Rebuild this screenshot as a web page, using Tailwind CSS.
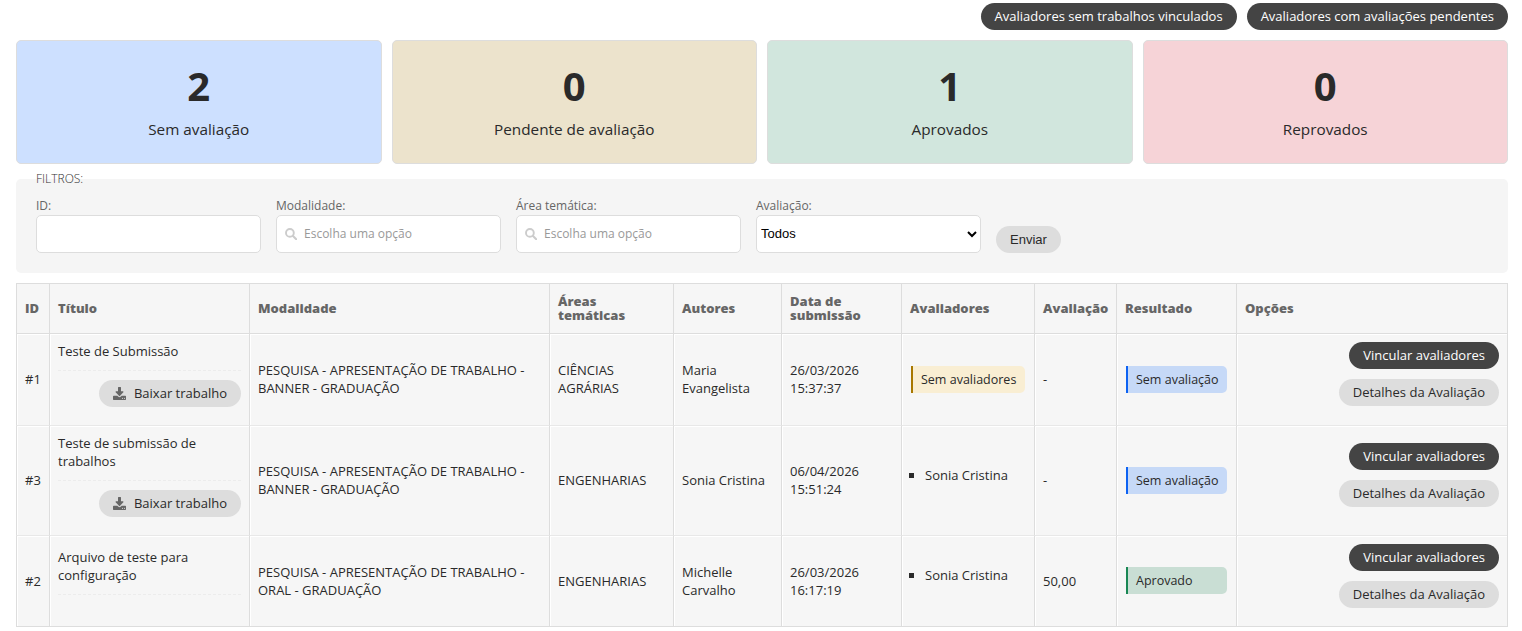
<!DOCTYPE html>
<html lang="pt-BR">
<head>
    <meta charset="UTF-8">
    <meta name="viewport" content="width=device-width, initial-scale=1.0">
    <title>Avaliação de trabalhos</title>
    <script src="https://cdn.jsdelivr.net/npm/@tailwindcss/browser@4"></script>
</head>
<body class="bg-white font-['Open_Sans',sans-serif] text-[13px] leading-[18px] text-[#2a2a2a]">
    <svg class="hidden">
        <symbol id="icon-download" viewBox="0 0 1664 1536" preserveAspectRatio="none">
            <path d="M1280 1344q0-26-19-45t-45-19-45 19-19 45 19 45 45 19 45-19 19-45zm256 0q0-26-19-45t-45-19-45 19-19 45 19 45 45 19 45-19 19-45zm128-224v320q0 40-28 68t-68 28H96q-40 0-68-28t-28-68v-320q0-40 28-68t68-28h465l135 136q58 56 136 56t136-56l136-136h464q40 0 68 28t28 68zm-325-569q17 41-14 70l-448 448q-18 19-45 19t-45-19L339 621q-31-29-14-70 17-39 59-39h256V64q0-26 19-45T704 0h256q26 0 45 19t19 45v448h256q42 0 59 39z" fill-rule="evenodd" />
        </symbol>
        <symbol id="icon-search" viewBox="0 0 12 12">
            <circle cx="4.900" cy="4.900" r="3.900" fill="none" stroke="currentColor" stroke-width="1.900" />
            <path d="M7.800 7.800L11.200 11.200" stroke="currentColor" stroke-width="2.100" stroke-linecap="round" />
        </symbol>
    </svg>

    <div class="px-4 pr-[14px] pt-[3px]">
        <!-- Actions -->
        <div class="flex justify-end gap-2.5">
            <a class="h-[27px] px-3.5 rounded-full bg-[#444] text-white leading-[27px]">Avaliadores sem trabalhos vinculados</a>
            <a class="h-[27px] px-3.5 rounded-full bg-[#444] text-white leading-[27px]">Avaliadores com avaliações pendentes</a>
        </div>

        <!-- Totals -->
        <div class="mt-2.5 grid grid-cols-4 gap-2.5 text-center">
            <div class="h-[124px] pt-[25px] rounded-[5px] border border-[#ddd] bg-[#cde0ff]">
                <p class="text-[40px] leading-10 font-bold">2</p>
                <p class="mt-[13px] text-[15.3px] leading-5 font-medium">Sem avaliação</p>
            </div>
            <div class="h-[124px] pt-[25px] rounded-[5px] border border-[#ddd] bg-[#ece3cc]">
                <p class="text-[40px] leading-10 font-bold">0</p>
                <p class="mt-[13px] text-[15.3px] leading-5 font-medium">Pendente de avaliação</p>
            </div>
            <div class="h-[124px] pt-[25px] rounded-[5px] border border-[#ddd] bg-[#d1e6dd]">
                <p class="text-[40px] leading-10 font-bold">1</p>
                <p class="mt-[13px] text-[15.3px] leading-5 font-medium">Aprovados</p>
            </div>
            <div class="h-[124px] pt-[25px] rounded-[5px] border border-[#ddd] bg-[#f6d3d7]">
                <p class="text-[40px] leading-10 font-bold">0</p>
                <p class="mt-[13px] text-[15.3px] leading-5 font-medium">Reprovados</p>
            </div>
        </div>

        <!-- Filters -->
        <form class="flow-root mt-[15px] h-[94px] px-5 rounded-[5px] bg-[#f5f5f5] text-xs text-[#666]">
            <div class="h-[18px] -mt-[9px] mb-[9px] leading-[18px] font-light text-[#333]">FILTROS:</div>
            <div class="flex items-end gap-[15px]">
                <div class="w-[225px]">
                    <label class="block leading-[18px]">ID:</label>
                    <input type="text" class="block w-full h-[38px] rounded-[5px] border border-[#ddd] bg-white">
                </div>
                <div class="w-[225px]">
                    <label class="block leading-[18px]">Modalidade:</label>
                    <div class="flex items-center h-[38px] pl-2 rounded-[5px] border border-[#ddd] bg-white text-[#999]">
                        <svg class="size-3 mr-[7px] text-[#ccc]"><use href="#icon-search" /></svg>Escolha uma opção
                    </div>
                </div>
                <div class="w-[225px]">
                    <label class="block leading-[18px]">Área temática:</label>
                    <div class="flex items-center h-[38px] pl-2 rounded-[5px] border border-[#ddd] bg-white text-[#999]">
                        <svg class="size-3 mr-[7px] text-[#ccc]"><use href="#icon-search" /></svg>Escolha uma opção
                    </div>
                </div>
                <div class="w-[225px]">
                    <label class="block leading-[18px]">Avaliação:</label>
                    <select class="block w-full h-[38px] pb-0.5 rounded-[5px] border border-[#ddd] bg-white font-['Liberation_Sans',sans-serif] text-[13px] text-black">
                        <option>Todos</option>
                    </select>
                </div>
                <button type="button" class="w-[65px] h-[27px] rounded-full bg-[#ddd] font-['Liberation_Sans',sans-serif] text-[13px] text-[#2a2a2a]">Enviar</button>
            </div>
        </form>

        <!-- Submissions -->
        <table class="mt-2.5 w-full table-fixed border-separate border-spacing-0 border-r border-[#ddd] bg-[#f6f6f6]">
            <colgroup>
                <col class="w-[33px]"><col class="w-[200px]"><col class="w-[300px]"><col class="w-[124px]"><col class="w-[108px]"><col class="w-[120px]"><col class="w-[133px]"><col class="w-[82px]"><col class="w-[120px]"><col>
            </colgroup>
            <thead class="text-left text-[13px] leading-[14px] text-[#666] [&_th]:border-y [&_th]:border-l [&_th]:border-[#ddd] [&_th]:px-2 [&_th]:pb-px [&_th]:font-extrabold">
                <tr class="h-[51px]">
                    <th>ID</th>
                    <th>Título</th>
                    <th>Modalidade</th>
                    <th>Áreas temáticas</th>
                    <th>Autores</th>
                    <th>Data de submissão</th>
                    <th>Avaliadores</th>
                    <th>Avaliação</th>
                    <th>Resultado</th>
                    <th>Opções</th>
                </tr>
            </thead>
            <tbody class="[&_td]:border-l [&_td]:border-b [&_td]:border-l-[#ddd] [&_td]:border-b-[#e8e8e8] [&_td]:px-2 [&_td]:pt-2 [&_td]:shadow-[inset_1px_1px_0_#fff] [&_tr:last-child_td]:border-b-[#ddd]">
                <tr class="h-[92px]">
                    <td class="pb-[9px]">#1</td>
                    <td class="pb-2">
                        <p>Teste de Submissão</p>
                        <div class="mt-2.5 pt-[9px] border-t border-dashed border-[#ececec] flex justify-end">
                            <a class="mb-2.5 h-[27px] px-3.5 rounded-full bg-[#ddd] leading-[27px] flex items-center"><svg class="size-[13px] mr-2 fill-[#666]"><use href="#icon-download" /></svg>Baixar trabalho</a>
                        </div>
                    </td>
                    <td class="pb-[9px]">PESQUISA - APRESENTAÇÃO DE TRABALHO - BANNER - GRADUAÇÃO</td>
                    <td class="pb-[9px]">CIÊNCIAS AGRÁRIAS</td>
                    <td class="pb-[9px]">Maria Evangelista</td>
                    <td class="pb-[9px]">26/03/2026 15:37:37</td>
                    <td class="pb-2"><div class="mx-px h-[27px] pl-2 rounded-r-[5px] border-l-2 border-[#a87800] bg-[#f9eed3] text-[12.5px] leading-[27px] whitespace-nowrap">Sem avaliadores</div></td>
                    <td class="pb-[9px]">-</td>
                    <td class="pb-2"><div class="mx-px h-[27px] pl-2 rounded-r-[5px] border-l-2 border-[#0d62f2] bg-[#c6d9f7] text-[12.5px] leading-[27px] whitespace-nowrap">Sem avaliação</div></td>
                    <td class="pb-[9px]">
                        <div class="flex flex-col items-end gap-2.5 pb-2.5 leading-[27px]">
                            <a class="h-[27px] px-3.5 rounded-full bg-[#444] text-white">Vincular avaliadores</a>
                            <a class="h-[27px] px-3.5 rounded-full bg-[#ddd]">Detalhes da Avaliação</a>
                        </div>
                    </td>
                </tr>
                <tr class="h-[110px]">
                    <td class="pb-[9px]">#3</td>
                    <td class="pb-2">
                        <p>Teste de submissão de trabalhos</p>
                        <div class="mt-2.5 pt-[9px] border-t border-dashed border-[#ececec] flex justify-end">
                            <a class="mb-2.5 h-[27px] px-3.5 rounded-full bg-[#ddd] leading-[27px] flex items-center"><svg class="size-[13px] mr-2 fill-[#666]"><use href="#icon-download" /></svg>Baixar trabalho</a>
                        </div>
                    </td>
                    <td class="pb-[9px]">PESQUISA - APRESENTAÇÃO DE TRABALHO - BANNER - GRADUAÇÃO</td>
                    <td class="pb-[9px]">ENGENHARIAS</td>
                    <td class="pb-[9px]">Sonia Cristina</td>
                    <td class="pb-[9px]">06/04/2026 15:51:24</td>
                    <td class="pb-[9px]">
                        <ul class="mb-2.5">
                            <li class="-ml-px flex items-center gap-[11px]"><span class="size-[5px] bg-[#2a2a2a]"></span>Sonia Cristina</li>
                        </ul>
                    </td>
                    <td class="pb-[9px]">-</td>
                    <td class="pb-2"><div class="mx-px h-[27px] pl-2 rounded-r-[5px] border-l-2 border-[#0d62f2] bg-[#c6d9f7] text-[12.5px] leading-[27px] whitespace-nowrap">Sem avaliação</div></td>
                    <td class="pb-[9px]">
                        <div class="flex flex-col items-end gap-2.5 pb-2.5 leading-[27px]">
                            <a class="h-[27px] px-3.5 rounded-full bg-[#444] text-white">Vincular avaliadores</a>
                            <a class="h-[27px] px-3.5 rounded-full bg-[#ddd]">Detalhes da Avaliação</a>
                        </div>
                    </td>
                </tr>
                <tr class="h-[91px]">
                    <td class="pb-2">#2</td>
                    <td class="pb-2">
                        <p>Arquivo de teste para configuração</p>
                        <div class="mt-2.5 h-5 border-t border-dashed border-[#ececec]"></div>
                    </td>
                    <td class="pb-2">PESQUISA - APRESENTAÇÃO DE TRABALHO - ORAL - GRADUAÇÃO</td>
                    <td class="pb-2">ENGENHARIAS</td>
                    <td class="pb-2">Michelle Carvalho</td>
                    <td class="pb-2">26/03/2026 16:17:19</td>
                    <td class="pb-2.5">
                        <ul class="mb-2.5">
                            <li class="-ml-px flex items-center gap-[11px]"><span class="size-[5px] bg-[#2a2a2a]"></span>Sonia Cristina</li>
                        </ul>
                    </td>
                    <td class="pb-2">50,00</td>
                    <td class="pb-[9px]"><div class="mx-px h-[27px] pl-2 rounded-r-[5px] border-l-2 border-[#198754] bg-[#c9ded4] text-[12.5px] leading-[27px] whitespace-nowrap">Aprovado</div></td>
                    <td class="pb-2">
                        <div class="flex flex-col items-end gap-2.5 pb-2.5 leading-[27px]">
                            <a class="h-[27px] px-3.5 rounded-full bg-[#444] text-white">Vincular avaliadores</a>
                            <a class="h-[27px] px-3.5 rounded-full bg-[#ddd]">Detalhes da Avaliação</a>
                        </div>
                    </td>
                </tr>
            </tbody>
        </table>
    </div>
</body>
</html>
